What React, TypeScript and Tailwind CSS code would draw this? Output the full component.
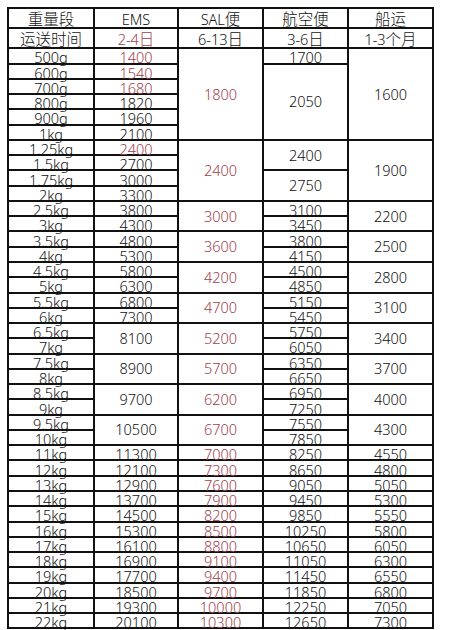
import React from "react";

type Cell = { t: string; n?: number; red?: boolean };

const weights: Cell[] = [
  "500g", "600g", "700g", "800g", "900g", "1kg", "1.25kg", "1.5kg", "1.75kg", "2kg",
  "2.5kg", "3kg", "3.5kg", "4kg", "4.5kg", "5kg", "5.5kg", "6kg", "6.5kg", "7kg",
  "7.5kg", "8kg", "8.5kg", "9kg", "9.5kg", "10kg", "11kg", "12kg", "13kg", "14kg",
  "15kg", "16kg", "17kg", "18kg", "19kg", "20kg", "21kg", "22kg",
].map((t) => ({ t }));

const ems: Cell[] = [
  { t: "1400", red: true }, { t: "1540", red: true }, { t: "1680", red: true },
  { t: "1820" }, { t: "1960" }, { t: "2100" }, { t: "2400", red: true },
  { t: "2700" }, { t: "3000" }, { t: "3300" }, { t: "3800" }, { t: "4300" },
  { t: "4800" }, { t: "5300" }, { t: "5800" }, { t: "6300" }, { t: "6800" }, { t: "7300" },
  { t: "8100", n: 2 }, { t: "8900", n: 2 }, { t: "9700", n: 2 }, { t: "10500", n: 2 },
  ...["11300", "12100", "12900", "13700", "14500", "15300", "16100", "16900", "17700", "18500", "19300", "20100"].map((t) => ({ t })),
];

const sal: Cell[] = [
  { t: "1800", n: 6, red: true }, { t: "2400", n: 4, red: true },
  ...["3000", "3600", "4200", "4700", "5200", "5700", "6200", "6700"].map((t) => ({ t, n: 2, red: true })),
  ...["7000", "7300", "7600", "7900", "8200", "8500", "8800", "9100", "9400", "9700", "10000", "10300"].map((t) => ({ t, red: true })),
];

const air: Cell[] = [
  { t: "1700" }, { t: "2050", n: 5 }, { t: "2400", n: 2 }, { t: "2750", n: 2 },
  ...["3100", "3450", "3800", "4150", "4500", "4850", "5150", "5450", "5750", "6050", "6350", "6650", "6950", "7250", "7550", "7850",
    "8250", "8650", "9050", "9450", "9850", "10250", "10650", "11050", "11450", "11850", "12250", "12650"].map((t) => ({ t })),
];

const ship: Cell[] = [
  { t: "1600", n: 6 }, { t: "1900", n: 4 },
  ...["2200", "2500", "2800", "3100", "3400", "3700", "4000", "4300"].map((t) => ({ t, n: 2 })),
  ...["4550", "4800", "5050", "5300", "5550", "5800", "6050", "6300", "6550", "6800", "7050", "7300"].map((t) => ({ t })),
];

const headers: [Cell, Cell][] = [
  [{ t: "重量段" }, { t: "运送时间" }],
  [{ t: "EMS" }, { t: "2-4日", red: true }],
  [{ t: "SAL便" }, { t: "6-13日" }],
  [{ t: "航空便" }, { t: "3-6日" }],
  [{ t: "船运" }, { t: "1-3个月" }],
];

const columns = [weights, ems, sal, air, ship];

function Txt({ s }: { s: string }) {
  const parts = s.split(/([\u4e00-\u9fff]+)/).filter(Boolean);
  return (
    <>
      {parts.map((p, i) =>
        /[\u4e00-\u9fff]/.test(p) ? (
          <span key={i} className="text-[15.5px] font-light font-['Noto_Sans_CJK_SC',sans-serif]">
            {p}
          </span>
        ) : (
          <span key={i}>{p}</span>
        )
      )}
    </>
  );
}

export default function App() {
  const cells: React.ReactNode[] = [];
  headers.forEach((h, c) => {
    h.forEach((cell, r) => {
      cells.push(
        <div
          key={`h${c}-${r}`}
          className="flex items-center justify-center border-r-2 border-b-2 border-[#111]"
          style={{ gridColumn: c + 1, gridRow: r + 1 }}
        >
          <span className={`whitespace-nowrap leading-[15px] translate-y-[0.5px] ${cell.red ? "text-[#a0404c]" : "text-[#111]"}`}>
            <Txt s={cell.t} />
          </span>
        </div>
      );
    });
  });
  columns.forEach((col, c) => {
    let row = 3;
    col.forEach((cell, i) => {
      const n = cell.n ?? 1;
      cells.push(
        <div
          key={`c${c}-${i}`}
          className="flex items-center justify-center border-r-2 border-b-2 border-[#111]"
          style={{ gridColumn: c + 1, gridRow: `${row} / span ${n}` }}
        >
          <span
            className={`whitespace-nowrap leading-[11px] ${n === 1 ? "translate-y-[1.7px]" : ""} ${cell.red ? "text-[#a0404c]" : "text-[#111]"}`}
          >
            {cell.t}
          </span>
        </div>
      );
      row += n;
    });
  });

  return (
    <div className="min-h-[630px] w-[449px] overflow-hidden bg-white pl-[7px] pt-[7px]">
      <div className="grid w-fit grid-cols-[86px_84px_85px_85px_85px] grid-rows-[20px_20.3px_repeat(38,15.28px)] border-l-2 border-t-2 border-[#111] font-['Noto_Sans','Noto_Sans_CJK_SC',sans-serif] text-[14.5px] font-light">
        {cells}
      </div>
    </div>
  );
}
